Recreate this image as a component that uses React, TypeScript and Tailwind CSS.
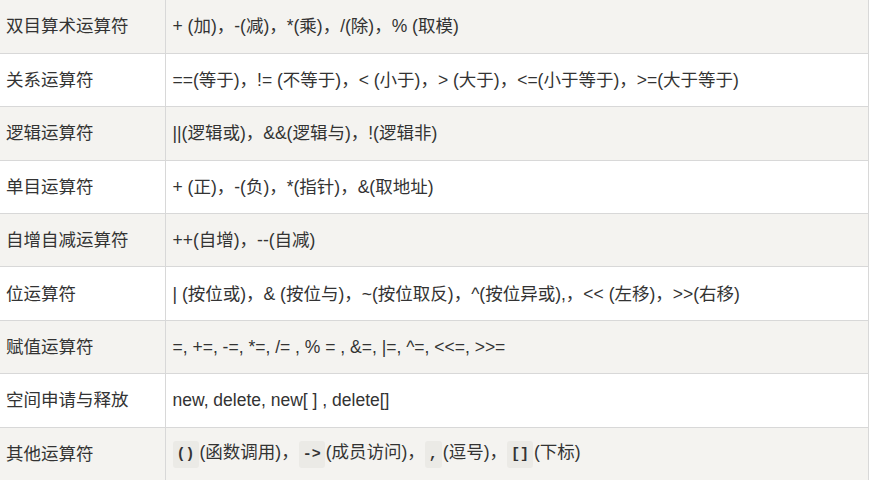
const rows: { name: string; ops: React.ReactNode }[] = [
  { name: '双目算术运算符', ops: '+ (加)，-(减)，*(乘)，/(除)，% (取模)' },
  { name: '关系运算符', ops: '==(等于)，!= (不等于)，< (小于)，> (大于)，<=(小于等于)，>=(大于等于)' },
  { name: '逻辑运算符', ops: '||(逻辑或)，&&(逻辑与)，!(逻辑非)' },
  { name: '单目运算符', ops: '+ (正)，-(负)，*(指针)，&(取地址)' },
  { name: '自增自减运算符', ops: '++(自增)，--(自减)' },
  { name: '位运算符', ops: '| (按位或)，& (按位与)，~(按位取反)，^(按位异或),，<< (左移)，>>(右移)' },
  { name: '赋值运算符', ops: '=, +=, -=, *=, /= , % = , &=, |=, ^=, <<=, >>=' },
  { name: '空间申请与释放', ops: 'new, delete, new[ ] , delete[]' },
  {
    name: '其他运算符',
    ops: (
      <>
        <Code>()</Code>(函数调用)，<Code>-&gt;</Code>(成员访问)，<Code>,</Code>(逗号)，<Code>[]</Code>(下标)
      </>
    ),
  },
]

function Code({ children }: { children: React.ReactNode }) {
  return (
    <code className="mr-[1px] inline-block rounded-[3px] bg-[#ebeae6] px-[4px] py-[3px] font-['Liberation_Mono',monospace] text-[15px] font-bold leading-[21px] text-[#333]">
      {children}
    </code>
  )
}

export default function App() {
  return (
    <div className="h-[480px] w-[870px] overflow-hidden bg-white font-['Liberation_Sans','Noto_Sans_CJK_SC',sans-serif] text-[17.5px] text-[#333]">
      <table className="w-[869px] border-collapse border-r border-[#d8d8d8]">
        <tbody>
          {rows.map((r, i) => (
            <tr key={i} className={i % 2 === 0 ? 'bg-[#f4f3f0]' : 'bg-white'}>
              <td className="h-[53.4px] w-[165px] border-b border-r border-[#d8d8d8] px-[6px] align-middle whitespace-nowrap">
                {r.name}
              </td>
              <td className="h-[53.4px] border-b border-[#d8d8d8] px-[7px] align-middle whitespace-nowrap">
                {r.ops}
              </td>
            </tr>
          ))}
        </tbody>
      </table>
    </div>
  )
}
